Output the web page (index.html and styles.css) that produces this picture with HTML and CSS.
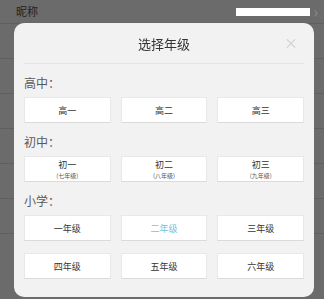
FILE: index.html
```html
<!DOCTYPE html>
<html lang="zh-CN">
<head>
    <meta charset="UTF-8">
    <title>选择年级</title>
    <link rel="stylesheet" href="styles.css">
</head>
<body>
<div class="page">
    <div class="row">
        <span class="row-label">昵称</span>
        <span class="row-value"></span>
        <span class="row-arrow">&#8250;</span>
    </div>
    <div class="row"></div>
    <div class="row"></div>
    <div class="row"></div>
    <div class="row"></div>
    <div class="row"></div>
    <div class="row"></div>
</div>

<div class="mask">
    <div class="dialog">
        <div class="dialog-head">
            <span class="dialog-title">选择年级</span>
            <span class="dialog-close">&times;</span>
        </div>

        <div class="group-title">高中：</div>
        <div class="grade-list">
            <span class="grade">高一</span>
            <span class="grade">高二</span>
            <span class="grade">高三</span>
        </div>

        <div class="group-title">初中：</div>
        <div class="grade-list">
            <span class="grade">初一<em>(七年级)</em></span>
            <span class="grade">初二<em>(八年级)</em></span>
            <span class="grade">初三<em>(九年级)</em></span>
        </div>

        <div class="group-title">小学：</div>
        <div class="grade-list">
            <span class="grade">一年级</span>
            <span class="grade current">二年级</span>
            <span class="grade">三年级</span>
        </div>
        <div class="grade-list last">
            <span class="grade">四年级</span>
            <span class="grade">五年级</span>
            <span class="grade">六年级</span>
        </div>
    </div>
</div>
</body>
</html>
```

FILE: styles.css
```css
*{
    margin: 0;
    padding: 0;
}
body{
    width: 324px;
    height: 299px;
    overflow: hidden;
    background-color: #6b6b6b;
    font-family: "Noto Sans CJK SC", "Noto Sans", sans-serif;
}
.page{
    height: 299px;
}
.row{
    height: 34px;
    border-bottom: 1px solid #5f5f5f;
    display: flex;
    align-items: center;
    padding: 0 6px 0 16px;
}
.row:first-child{
    height: 23px;
    align-items: flex-start;
}
.row-label{
    font-size: 11px;
    line-height: 23px;
    color: #1e1e1e;
    flex: 1;
}
.row-value{
    width: 74px;
    height: 8px;
    margin-top: 8px;
    background-color: #fff;
}
.row-arrow{
    font-size: 16px;
    line-height: 22px;
    color: #8a8a8a;
    margin-left: 3px;
}

.mask{
    position: fixed;
    left: 0;
    top: 0;
    right: 0;
    bottom: 0;
}
.dialog{
    position: absolute;
    left: 14px;
    top: 23px;
    width: 300px;
    height: 274px;
    box-sizing: border-box;
    background-color: #f2f2f2;
    border-radius: 10px;
    padding: 0 10px;
}
.dialog-head{
    height: 40px;
    border-bottom: 1px solid #e3e3e3;
    display: flex;
    justify-content: center;
    align-items: center;
    position: relative;
}
.dialog-title{
    font-size: 13px;
    color: #333;
}
.dialog-close{
    position: absolute;
    right: 6px;
    top: 12px;
    font-size: 14px;
    line-height: 14px;
    color: #d0d0d0;
}
.group-title{
    height: 33px;
    line-height: 38px;
    font-size: 12px;
    color: #5a5a5a;
}
.grade-list{
    display: grid;
    grid-template-columns: repeat(3, 1fr);
    gap: 10px;
}
.grade-list.last{
    margin-top: 12px;
}
.grade{
    height: 26px;
    background-color: #fff;
    border: 1px solid #e8e8e8;
    border-bottom-color: #dadada;
    box-sizing: border-box;
    display: flex;
    flex-direction: column;
    justify-content: center;
    align-items: center;
    font-size: 9px;
    line-height: 13px;
    color: #333;
}
.grade em{
    font-style: normal;
    font-size: 6px;
    line-height: 9px;
    color: #555;
}
.grade.current{
    color: #6ec3de;
}
```
